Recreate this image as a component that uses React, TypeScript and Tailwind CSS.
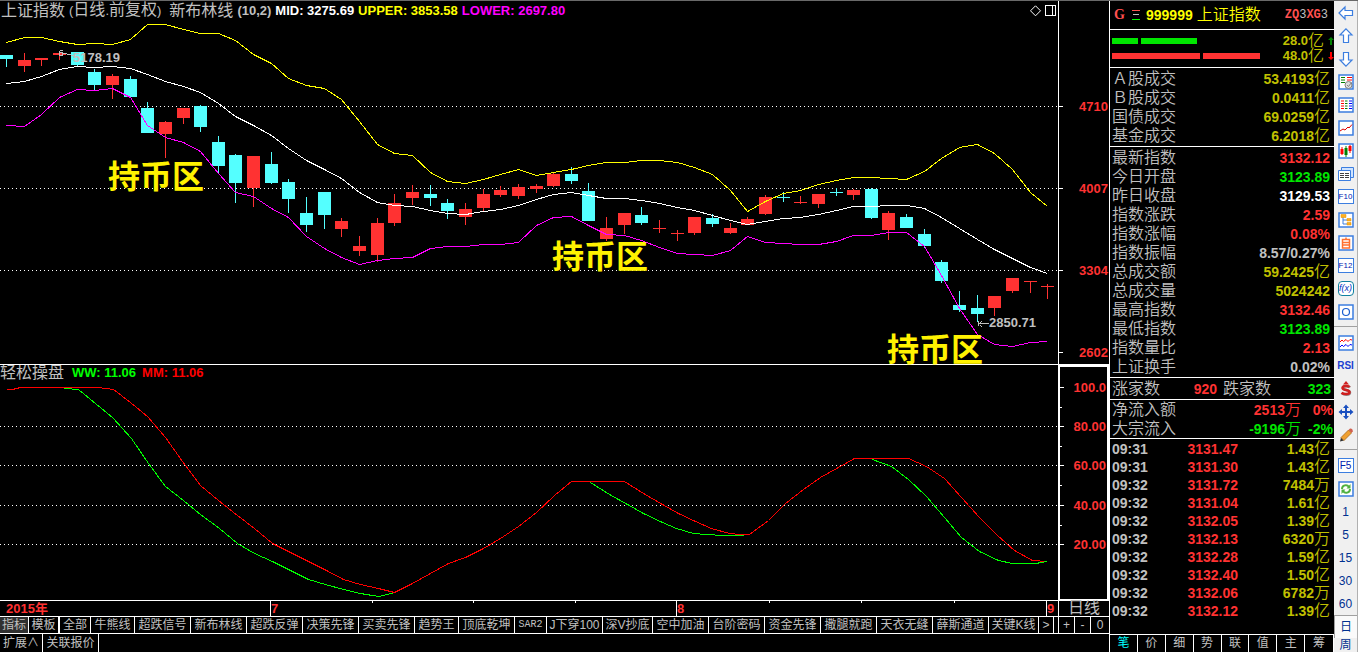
import { clsx } from "clsx";
import { useState } from "react";
import type { ReactNode } from "react";

const RED = "#ff3232";
const CYAN = "#54ffff";

// chart canvas: 60 daily candles over a 1058 unit wide plot
const STEP = 17.65;
const candleX = (i: number) => Math.round(6 + i * STEP);

// [up ? 1 : 0, body top, body bottom, high, low]
const candles: number[][] = [
    [0, 55, 59, 55, 67],
    [1, 60, 66, 53, 72],
    [1, 58, 60, 58, 66],
    [1, 53, 55, 53, 60],
    [0, 52, 65, 52, 66],
    [0, 72, 85, 69, 90],
    [1, 76, 85, 74, 99],
    [0, 79, 97, 76, 97],
    [0, 108, 133, 102, 133],
    [1, 122, 134, 121, 158],
    [1, 108, 118, 108, 124],
    [0, 106, 127, 105, 132],
    [0, 142, 166, 136, 173],
    [0, 155, 183, 154, 203],
    [1, 156, 188, 156, 207],
    [0, 164, 183, 152, 184],
    [0, 182, 199, 179, 213],
    [0, 213, 225, 197, 232],
    [0, 192, 215, 192, 229],
    [1, 221, 229, 218, 237],
    [1, 246, 251, 236, 256],
    [1, 223, 255, 218, 262],
    [1, 203, 223, 194, 226],
    [1, 192, 198, 185, 205],
    [0, 194, 198, 185, 206],
    [0, 203, 211, 199, 219],
    [1, 209, 217, 203, 225],
    [1, 194, 208, 189, 212],
    [1, 190, 195, 186, 197],
    [1, 187, 196, 184, 199],
    [1, 186, 189, 184, 193],
    [1, 174, 186, 172, 187],
    [0, 174, 181, 167, 184],
    [0, 191, 221, 183, 221],
    [1, 228, 239, 217, 241],
    [1, 213, 225, 213, 234],
    [0, 215, 223, 207, 225],
    [1, 228, 229, 220, 233],
    [1, 233, 234, 230, 241],
    [1, 217, 233, 217, 235],
    [0, 218, 224, 214, 227],
    [1, 228, 233, 223, 234],
    [1, 219, 225, 217, 225],
    [1, 197, 214, 195, 215],
    [0, 197, 198, 192, 202],
    [1, 202, 203, 196, 204],
    [1, 194, 204, 194, 208],
    [0, 192, 193, 188, 196],
    [1, 190, 195, 189, 200],
    [0, 189, 218, 188, 219],
    [1, 213, 230, 211, 240],
    [0, 217, 228, 214, 228],
    [0, 234, 246, 229, 248],
    [0, 262, 281, 260, 283],
    [0, 305, 310, 291, 312],
    [0, 308, 314, 295, 322],
    [1, 296, 308, 296, 316],
    [1, 278, 291, 278, 293],
    [1, 281, 282, 281, 293],
    [1, 286, 287, 284, 299],
];

const upper = [
    42, 37, 37, 41, 44, 43, 44, 39, 24, 24, 29, 33, 33, 40, 54, 63, 78, 85, 88,
    99, 121, 144, 153, 155, 172, 181, 183, 179, 174, 169, 175, 172, 169, 165,
    162, 162, 160, 160, 162, 167, 174, 190, 211, 201, 193, 190, 184, 180, 177,
    177, 178, 179, 171, 158, 147, 144, 153, 169, 192, 206,
];
const mid = [
    83, 81, 76, 69, 66, 67, 66, 68, 74, 81, 86, 92, 103, 116, 125, 135, 148,
    160, 169, 178, 192, 202, 205, 206, 210, 213, 214, 211, 209, 205, 199, 194,
    192, 195, 198, 198, 200, 203, 207, 210, 215, 220, 224, 221, 218, 217, 214,
    210, 206, 206, 205, 205, 208, 217, 228, 239, 249, 258, 267, 273,
];
const lower = [
    125, 126, 114, 97, 89, 90, 88, 97, 125, 137, 142, 151, 173, 192, 196, 208,
    217, 236, 248, 257, 264, 260, 258, 257, 248, 246, 246, 244, 244, 242, 225,
    217, 216, 225, 234, 235, 240, 247, 253, 254, 255, 250, 236, 242, 243, 244,
    244, 241, 235, 235, 232, 232, 246, 275, 308, 334, 344, 346, 342, 341,
];

const toPoints = (ys: number[]) =>
    ys.map((y, i) => `${candleX(i) + 0.5},${y + 0.5}`).join(" ");

const wwLine =
    "64,388 78,389 95,403 112,417 131,438 148,463 165,486 183,500 200,514 219,528 237,543 254,553 272,561 290,570 308,579 325,584 343,589 360,593 378,596 395,592";
const wwLine2 =
    "590,482 609,494 627,504 643,513 662,522 676,528 693,533 706,534 723,535 740,535 748,534";
const wwLine3 =
    "872,459 891,466 908,479 926,496 944,517 961,537 979,551 998,560 1012,563 1035,563 1047,561";
const mmLine =
    "6,389 12,389 20,387 98,387 113,389 130,402 147,416 165,437 182,461 200,485 218,500 237,515 254,528 272,543 290,552 308,561 326,570 343,579 360,584 378,588 394,592 412,583 430,573 448,563 465,557 483,548 500,538 518,526 536,512 554,495 571,481 624,481 643,493 662,504 678,513 695,521 711,528 729,533 740,534 749,534 768,520 785,503 803,489 820,477 838,467 854,458 908,458 926,466 944,478 961,497 979,517 997,535 1014,550 1032,560 1047,561";

const priceAxis = [
    { label: "4710", y: 106 },
    { label: "4007", y: 188 },
    { label: "3304", y: 270 },
    { label: "2602", y: 352 },
];
const indicatorAxis = [
    { label: "100.0", y: 387 },
    { label: "80.00", y: 426 },
    { label: "60.00", y: 465 },
    { label: "40.00", y: 505 },
    { label: "20.00", y: 544 },
];

const zones = [
    { x: 108, y: 177 },
    { x: 552, y: 257 },
    { x: 887, y: 350 },
];

const months = [
    { label: "7", x: 270 },
    { label: "8", x: 676 },
    { label: "9", x: 1046 },
];

const tabs = [
    { label: "模板", w: "w-[31px] border-r-2" },
    { label: "全部", w: "w-[31px]" },
    { label: "牛熊线", w: "w-11" },
    { label: "超跌信号", w: "w-14" },
    { label: "新布林线", w: "w-14" },
    { label: "超跌反弹", w: "w-14" },
    { label: "决策先锋", w: "w-14" },
    { label: "买卖先锋", w: "w-14" },
    { label: "趋势王", w: "w-11" },
    { label: "顶底乾坤", w: "w-14" },
    { label: "SAR2", w: "w-8 font-['Liberation_Mono',monospace] text-[10px]" },
    { label: "J下穿100", w: "w-14" },
    { label: "深V抄底", w: "w-[50px]" },
    { label: "空中加油", w: "w-14" },
    { label: "台阶密码", w: "w-14" },
    { label: "资金先锋", w: "w-14" },
    { label: "撒腿就跑", w: "w-14" },
    { label: "天衣无缝", w: "w-14" },
    { label: "薛斯通道", w: "w-14" },
    { label: "关键K线", w: "w-[50px]" },
];

const turnover = [
    ["Ａ股成交", "53.4193"],
    ["Ｂ股成交", "0.0411"],
    ["国债成交", "69.0259"],
    ["基金成交", "6.2018"],
];

const quotes = [
    { label: "最新指数", value: "3132.12", color: "text-[#ff3232]" },
    { label: "今日开盘", value: "3123.89", color: "text-[#00e600]" },
    { label: "昨日收盘", value: "3129.53", color: "text-white" },
    { label: "指数涨跌", value: "2.59", color: "text-[#ff3232]" },
    { label: "指数涨幅", value: "0.08%", color: "text-[#ff3232]" },
    { label: "指数振幅", value: "8.57/0.27%", color: "text-[#c0c0c0]" },
    { label: "总成交额", value: "59.2425", unit: "亿", color: "text-[#c0c000]" },
    { label: "总成交量", value: "5024242", color: "text-[#c0c000]" },
    { label: "最高指数", value: "3132.46", color: "text-[#ff3232]" },
    { label: "最低指数", value: "3123.89", color: "text-[#00e600]" },
    { label: "指数量比", value: "2.13", color: "text-[#ff3232]" },
    { label: "上证换手", value: "0.02%", color: "text-[#c0c0c0]" },
];

const ticks = [
    ["09:31", "3131.47", "1.43", "亿"],
    ["09:31", "3131.30", "1.43", "亿"],
    ["09:32", "3131.72", "7484", "万"],
    ["09:32", "3131.04", "1.61", "亿"],
    ["09:32", "3132.05", "1.39", "亿"],
    ["09:32", "3132.13", "6320", "万"],
    ["09:32", "3132.28", "1.59", "亿"],
    ["09:32", "3132.40", "1.50", "亿"],
    ["09:32", "3132.06", "6782", "万"],
    ["09:32", "3132.12", "1.39", "亿"],
];

const Unit = ({ children }: { children: ReactNode }) => (
    <span className="text-base leading-none font-[350]">{children}</span>
);

const PriceChart = () => (
    <section className="relative min-h-0">
        <svg
            viewBox="0 1 1058 363"
            preserveAspectRatio="none"
            shapeRendering="crispEdges"
            className="block h-full w-full"
            fill="none"
        >
            {[106, 188, 270].map((y) => (
                <line
                    key={y}
                    x1="0"
                    x2="1058"
                    y1={y + 0.5}
                    y2={y + 0.5}
                    stroke="#fff"
                    strokeDasharray="1 3"
                />
            ))}
            {candles.map(([up, top, bottom, high, low], i) => (
                <g key={i} fill={up ? RED : CYAN}>
                    <rect x={candleX(i)} y={high} width="1" height={low - high} />
                    <rect
                        x={candleX(i) - 6}
                        y={top}
                        width="13"
                        height={bottom - top}
                    />
                </g>
            ))}
            <polyline points={toPoints(upper)} stroke="#ffff00" />
            <polyline points={toPoints(mid)} stroke="#fff" />
            <polyline points={toPoints(lower)} stroke="#ff00ff" />
            <path
                d="M63 50.5h-2.500l-1.500 2v3h3.500v-3h-3M63 53.500h4M67 54.500h4M71 55.500h3"
                stroke="#c0c0c0"
            />
            <path
                d="M978 323.500h11M978.500 321v5M980.500 321.500v1M981.500 320.500v1M980.500 324.500v1M981.500 325.500v1"
                stroke="#c0c0c0"
            />
        </svg>

        <div className="absolute inset-x-0 top-0 flex items-center gap-1 px-px text-[13px] leading-[18px] font-bold whitespace-nowrap">
            <h1 className="flex items-center gap-1 font-normal text-[#c0c0c0]">
                <span className="text-base leading-[18px]">上证指数</span>
                <span>
                    (<span className="text-base leading-[18px]">日线</span>.
                    <span className="text-base leading-[18px]">前复权</span>)
                </span>
                <span className="pl-1 text-base leading-[18px]">新布林线</span>
                <span className="font-bold">(10,2)</span>
            </h1>
            <span className="text-white">MID: 3275.69</span>
            <span className="text-[#ffff00]">UPPER: 3853.58</span>
            <span className="text-[#ff00ff]">LOWER: 2697.80</span>
            <svg
                viewBox="0 0 26 12"
                className="mr-px ml-auto h-3 w-[26px]"
                fill="none"
                stroke="#fff"
            >
                <path d="M5.500 .8l5 5-5 5-5-5z" />
                <path
                    d="M15.500 .5h10v10h-10zM22.500 .5v10"
                    shapeRendering="crispEdges"
                />
            </svg>
        </div>

        <Annotation x={73} y={57}>
            5178.19
        </Annotation>
        <Annotation x={989} y={322}>
            2850.71
        </Annotation>
        {zones.map((z) => (
            <span
                key={z.x}
                className="absolute -translate-y-1/2 text-[32px] leading-8 font-bold text-[#fff200]"
                style={{
                    left: `${(z.x / 1058) * 100}%`,
                    top: `${((z.y - 1) / 363) * 100}%`,
                }}
            >
                持币区
            </span>
        ))}
    </section>
);

const Annotation = (props: { x: number; y: number; children: ReactNode }) => (
    <span
        className="absolute -translate-y-1/2 text-[13px] leading-4 font-bold text-[#c0c0c0]"
        style={{
            left: `${(props.x / 1058) * 100}%`,
            top: `${(props.y / 363) * 100}%`,
        }}
    >
        {props.children}
    </span>
);

const IndicatorChart = () => (
    <section className="relative min-h-0 overflow-hidden">
        <svg
            viewBox="0 365 1058 235"
            preserveAspectRatio="none"
            shapeRendering="crispEdges"
            className="block h-full w-full"
            fill="none"
        >
            {[426, 465, 505, 544].map((y) => (
                <line
                    key={y}
                    x1="0"
                    x2="1058"
                    y1={y + 0.5}
                    y2={y + 0.5}
                    stroke="#fff"
                    strokeDasharray="1 3"
                />
            ))}
            <g transform="translate(.5 .5)">
                <polyline points={wwLine} stroke="#00ff00" />
                <polyline points={wwLine2} stroke="#00ff00" />
                <polyline points={mmLine} stroke="#ff0000" />
                <polyline points={wwLine3} stroke="#00ff00" />
            </g>
        </svg>
        <div className="absolute inset-x-0 top-0 flex items-center gap-1.5 text-[13px] leading-4 font-bold whitespace-nowrap">
            <h2 className="w-[66px] text-base leading-4 font-normal text-[#c0c0c0]">
                轻松操盘
            </h2>
            <span className="text-[#00ff00]">WW: 11.06</span>
            <span className="text-[#ff0000]">MM: 11.06</span>
        </div>
    </section>
);

const AxisScale = (props: {
    items: { label: string; y: number }[];
    start: number;
    height: number;
    minor?: number[];
}) => {
    const { items, start, height, minor } = props;
    const top = (y: number) => `${((y - start) / height) * 100}%`;

    return (
        <>
            {items.map((item) => (
                <div
                    key={item.label}
                    className="absolute inset-x-0 flex h-px items-center justify-between pr-px"
                    style={{ top: top(item.y) }}
                >
                    <span className="h-px w-1 bg-white" />
                    <span className="text-[13px] leading-4 font-bold text-[#ff3232]">
                        {item.label}
                    </span>
                </div>
            ))}
            {minor?.map((y) => (
                <span
                    key={y}
                    className="absolute left-0 h-px w-0.5 bg-white"
                    style={{ top: top(y) }}
                />
            ))}
        </>
    );
};

const TimeAxis = () => (
    <div className="flex h-[17px] border-y border-white">
        <div className="relative min-w-0 flex-1 text-[13px] leading-4 font-bold text-[#ff3232]">
            <span className="pl-1.5">2015年</span>
            {months.map((m) => (
                <span
                    key={m.label}
                    className="absolute top-0 h-full border-l border-white"
                    style={{ left: `${(m.x / 1058) * 100}%` }}
                >
                    {m.label}
                </span>
            ))}
            {[372, 473, 575, 769, 861, 954].map((x) => (
                <span
                    key={x}
                    className="absolute top-0 h-0.5 w-px bg-white"
                    style={{ left: `${(x / 1058) * 100}%` }}
                />
            ))}
        </div>
        <div className="w-[51px] border-l border-white text-center text-base leading-[14px] text-[#c0c0c0]">
            日线
        </div>
    </div>
);

const tabClass =
    "flex-none overflow-hidden border-r border-white text-center whitespace-nowrap";

const BottomTabs = () => {
    const [active, setActive] = useState("指标");

    return (
        <>
            <nav className="flex h-[17px] border-b border-white text-xs leading-4 text-[#c0c0c0]">
                <div className="flex min-w-0 flex-1 overflow-hidden">
                    {[{ label: "指标", w: "w-[29px]" }, ...tabs].map((tab) => (
                        <button
                            key={tab.label}
                            onClick={() => setActive(tab.label)}
                            className={clsx(
                                tabClass,
                                tab.w,
                                active === tab.label && "bg-[#303030]"
                            )}
                        >
                            {tab.label}
                        </button>
                    ))}
                    <button className="w-[15px] border-r border-white text-center">
                        &gt;
                    </button>
                </div>
                <button className="w-[17px] border-x border-white">+</button>
                <button className="w-4 border-r border-white">-</button>
                <button className="w-[18px]">0</button>
            </nav>
            <div className="flex h-[18px] text-xs leading-[18px] text-[#c0c0c0]">
                <button className="w-[43px] border-r border-white">扩展∧</button>
                <button className="w-14 border-r border-white">关联报价</button>
            </div>
        </>
    );
};

const SideHeader = () => (
    <header className="flex h-7 items-center pr-1.5 pl-1 whitespace-nowrap">
        <span className="w-[18px] font-['Liberation_Serif',serif] text-sm font-bold text-[#ff5050]">
            G
        </span>
        <svg
            viewBox="0 0 8 10"
            shapeRendering="crispEdges"
            className="mr-1.5 h-2.5 w-2"
        >
            <path d="M0 0h8v1H0z" fill="#ff5050" />
            <path d="M1 4h6v1H1z" fill="#c0c0c0" />
            <path d="M0 9h8v1H0z" fill="#00ff00" />
        </svg>
        <span className="text-sm font-bold text-[#ffff00]">999999</span>
        <span className="pl-1 text-base font-[350] text-[#ffff00]">
            上证指数
        </span>
        <span className="ml-auto font-['Liberation_Mono',monospace] text-xs font-bold text-[#ff5050]">
            ZQ<span className="font-normal text-[#c0c0c0]">3</span>XG
            <span className="font-normal text-[#c0c0c0]">3</span>
        </span>
    </header>
);

const VolumeBar = (props: {
    color: string;
    parts: [string, string];
    value: string;
    arrow: ReactNode;
}) => (
    <div className="flex h-[15px] items-center text-[13px] leading-[15px] font-bold text-[#c0c000]">
        <span className={clsx("mr-[3px] h-1.5", props.color, props.parts[0])} />
        <span className={clsx("h-1.5", props.color, props.parts[1])} />
        <span className="ml-auto flex items-center">
            {props.value}
            <Unit>亿</Unit>
        </span>
        {props.arrow}
    </div>
);

const SidePanel = () => {
    const [view, setView] = useState("笔");

    return (
        <aside className="flex w-[225px] flex-none flex-col border-l border-white text-sm font-bold">
            <SideHeader />
            <div className="border-t border-white pt-[3px] pb-1 pl-0.5">
                <VolumeBar
                    color="bg-[#00e600]"
                    parts={["w-[26px]", "w-14"]}
                    value="28.0"
                    arrow={
                        <svg viewBox="0 0 6 8" className="ml-1 h-2 w-1.5" fill="#008000">
                            <path d="M3 0l3 3H4v5H2V3H0z" />
                        </svg>
                    }
                />
                <VolumeBar
                    color="bg-[#ff3232]"
                    parts={["w-[88px]", "w-[57px]"]}
                    value="48.0"
                    arrow={
                        <svg viewBox="0 0 6 8" className="ml-1 h-2 w-1.5" fill="#ff0000">
                            <path d="M3 8L0 5h2V0h2v5h2z" />
                        </svg>
                    }
                />
            </div>

            <dl className="border-t border-white py-px pr-1 pl-0.5">
                {turnover.map(([label, value]) => (
                    <div key={label} className="flex h-[19px] items-center justify-between">
                        <dt className="text-base font-[350] text-[#c0c0c0]">
                            {label}
                        </dt>
                        <dd className="flex items-center text-[#c0c000]">
                            {value}
                            <Unit>亿</Unit>
                        </dd>
                    </div>
                ))}
            </dl>

            <dl className="border-t border-white py-px pr-1 pl-0.5">
                {quotes.map((q) => (
                    <div key={q.label} className="flex h-[19px] items-center justify-between">
                        <dt className="text-base font-[350] text-[#c0c0c0]">
                            {q.label}
                        </dt>
                        <dd className={clsx("flex items-center", q.color)}>
                            {q.value}
                            {q.unit && <Unit>{q.unit}</Unit>}
                        </dd>
                    </div>
                ))}
            </dl>

            <div className="flex h-[22px] items-center border-t border-white pr-[3px] pl-0.5">
                <Unit>
                    <span className="text-[#c0c0c0]">涨家数</span>
                </Unit>
                <span className="flex-1 text-right text-[#ff3232]">920</span>
                <span className="pl-1.5">
                    <Unit>
                        <span className="text-[#c0c0c0]">跌家数</span>
                    </Unit>
                </span>
                <span className="w-[60px] text-right text-[#00e600]">323</span>
            </div>

            <div className="border-t border-white pr-px pl-0.5">
                {[
                    ["净流入额", "2513", "0%", "text-[#ff3232]"],
                    ["大宗流入", "-9196", "-2%", "text-[#00e600]"],
                ].map(([label, value, percent, color]) => (
                    <div key={label} className={clsx("flex h-[19px] items-center", color)}>
                        <span className="text-base font-[350] text-[#c0c0c0]">
                            {label}
                        </span>
                        <span className="ml-auto flex items-center">
                            {value}
                            <Unit>万</Unit>
                        </span>
                        <span className="w-8 text-right">{percent}</span>
                    </div>
                ))}
            </div>

            <div className="min-h-0 flex-1 overflow-hidden border-t border-white pt-px">
                <table className="w-full leading-[18px]">
                    <tbody>
                        {ticks.map(([time, price, amount, unit], i) => (
                            <tr key={i} className="h-[18px]">
                                <td className="p-0 pl-0.5 text-[#c0c0c0]">{time}</td>
                                <td className="p-0 text-right text-[#ff3232]">
                                    {price}
                                </td>
                                <td className="w-24 p-0 pr-1 text-[#c0c000]">
                                    <span className="flex h-[18px] items-center justify-end">
                                        {amount}
                                        <Unit>{unit}</Unit>
                                    </span>
                                </td>
                            </tr>
                        ))}
                    </tbody>
                </table>
            </div>

            <nav className="grid h-[18px] grid-cols-8 border-t border-r border-white text-xs leading-[17px] font-normal">
                {["笔", "价", "细", "势", "联", "值", "主", "筹"].map((name) => (
                    <button
                        key={name}
                        onClick={() => setView(name)}
                        className={clsx(
                            "border-r border-white last:border-r-0",
                            view === name ? "text-[#00ffff]" : "text-[#c0c0c0]"
                        )}
                    >
                        {name}
                    </button>
                ))}
            </nav>
        </aside>
    );
};

const Framed = ({ children }: { children?: ReactNode }) => (
    <svg viewBox="0 0 16 16" className="size-4" fill="none">
        <path d="M1 1h14v14H1z" fill="#fff" stroke="#3c7ee0" strokeWidth="1.500" />
        {children}
    </svg>
);

const TextIcon = ({ children }: { children: ReactNode }) => (
    <span className="block h-[15px] w-4 border border-[#3c7ee0] bg-white text-center text-[8px] leading-[13px] text-[#0020b0]">
        {children}
    </span>
);

const ArrowIcon = ({ d }: { d: string }) => (
    <svg viewBox="0 0 16 16" className="size-4" fill="#fff" stroke="#3c7ee0">
        <path d={d} strokeWidth="1.200" />
    </svg>
);

const tools: { name: string; icon: ReactNode }[] = [
    { name: "返回", icon: <ArrowIcon d="M1 8l6-6v3.500h7.500v5H7v3.500z" /> },
    { name: "上移", icon: <ArrowIcon d="M8 .8l6 6.200h-3.500v7.500h-5v-7.500h-3.500z" /> },
    { name: "下移", icon: <ArrowIcon d="M8 15.200l6-6.200h-3.500v-7.500h-5v7.500h-3.500z" /> },
    {
        name: "报价",
        icon: (
            <Framed>
                <path d="M3 3.500h4M3 6h4M3 8.500h4" stroke="#008000" />
                <path d="M9 3.500h5M9 6h5" stroke="#ff0000" />
                <circle cx="10.500" cy="11" r="3.500" fill="#ddd" stroke="#808080" />
                <path d="M9 11l1.500 1.500 3-4" stroke="#808080" />
            </Framed>
        ),
    },
    {
        name: "列表",
        icon: (
            <Framed>
                <path d="M3 4h3M3 6.500h3M3 9h3M3 11.500h3" stroke="#ff0000" />
                <path d="M7 4h2.500M7 6.500h2.500M7 9h2.500M7 11.500h2.500" stroke="#008000" />
                <path d="M11 4h3M11 6.500h3M11 9h3M11 11.500h3" stroke="#0000ff" />
            </Framed>
        ),
    },
    {
        name: "分时",
        icon: (
            <Framed>
                <path d="M2 11l3-2 2 1 3-3 1 1 3-3.500" stroke="#e00000" />
            </Framed>
        ),
    },
    {
        name: "K线",
        icon: (
            <Framed>
                <path d="M4 4v8M12 2v8" stroke="#ff0000" />
                <path d="M8 3v11" stroke="#008000" />
                <path d="M2.500 6h3v5h-3zM10.500 3h3v5h-3z" fill="#ff0000" />
                <path d="M6.500 5h3v7h-3z" fill="#008000" />
            </Framed>
        ),
    },
    {
        name: "资讯",
        icon: (
            <svg viewBox="0 0 16 16" className="size-4" fill="#fff" stroke="#3c7ee0">
                <path d="M3.500 1.500h12v10h-12z" fill="#cfe4ff" />
                <path d="M.5 4.500h12v10H.5z" />
                <path d="M2 7.500h4M7 7.500h4M2 9.500h4M7 9.500h4M2 11.500h4M7 11.500h4" stroke="#404040" />
            </svg>
        ),
    },
    { name: "基本资料", icon: <TextIcon>F10</TextIcon> },
    {
        name: "板块",
        icon: (
            <Framed>
                <path d="M5 5v7h4M5 8h4" stroke="#3c7ee0" />
                <path d="M3 2.500h5v3H3zM9 6.500h4v2.500H9zM9 10.500h4v2.500H9z" fill="#ffb020" stroke="#e09000" strokeWidth=".5" />
            </Framed>
        ),
    },
    {
        name: "自选",
        icon: (
            <Framed>
                <path d="M4.500 4.500h7v8.500h-7zM4.500 7.500h7M4.500 10h7M8 2.500v2" stroke="#ff7030" strokeWidth="1.500" />
            </Framed>
        ),
    },
    { name: "分类", icon: <TextIcon>F12</TextIcon> },
    {
        name: "公式",
        icon: (
            <span className="block h-[15px] w-4 rounded-sm border border-[#1080a0] bg-white text-center text-[9px] leading-[12px] text-[#0030c0] italic">
                f(x)
            </span>
        ),
    },
    {
        name: "周期",
        icon: (
            <Framed>
                <circle cx="8" cy="8" r="3.500" stroke="#1a5fd0" strokeWidth="1.200" />
            </Framed>
        ),
    },
];

const drawTools: { name: string; icon: ReactNode }[] = [
    {
        name: "叠加",
        icon: (
            <Framed>
                <path d="M2 7l2-2 1.500 1.500L8 4.500l2 2 2-2 2 .5" stroke="#ff0000" />
                <path d="M2 12l2-2 1.500 1.500L8 9.500l2 2 2-2 2 .5" stroke="#0000ff" />
            </Framed>
        ),
    },
    {
        name: "RSI",
        icon: <span className="text-[10px] font-bold text-[#2040d0]">RSI</span>,
    },
    {
        name: "交易",
        icon: (
            <svg viewBox="0 0 16 16" className="size-4" fill="none">
                <path d="M12 6.500C11 5 5 4.500 5 7c0 2.500 7 1.500 7 4.500 0 3-6 2.500-8 .8" stroke="#909090" strokeWidth="2.500" />
                <path d="M11.500 6C10.500 4.500 4.500 4.500 4.500 7c0 2.500 7 1.500 7 4 0 2.800-6 2.500-8 .8" stroke="#d02020" strokeWidth="2.500" />
                <path d="M8 0l3 3.500H5z" fill="#d02020" />
            </svg>
        ),
    },
    {
        name: "移动",
        icon: (
            <svg viewBox="0 0 16 16" className="size-4" fill="#1a50c0">
                <path d="M8 .5l3 3.500H5zM8 15.500l3-3.500H5zM.5 8L4 5v6zM15.500 8L12 5v6z" />
                <path d="M7 4h2v3h3v2H9v3H7V9H4V7h3z" />
            </svg>
        ),
    },
    {
        name: "画线",
        icon: (
            <svg viewBox="0 0 16 16" className="size-4">
                <path d="M2 14.500l1-4 3 3z" fill="#303030" />
                <path d="M3 10.500l7.500-7.500 3 3L6 13.500z" fill="#f0a030" stroke="#a06010" strokeWidth=".7" />
                <path d="M10.500 3L12 1.500c1.500-.5 3 1 2.800 2.800L13.500 6z" fill="#d06050" />
            </svg>
        ),
    },
];

const periodTools: { name: string; icon: ReactNode }[] = [
    { name: "F5", icon: <TextIcon><span className="text-[10px]">F5</span></TextIcon> },
    {
        name: "刷新",
        icon: (
            <Framed>
                <path d="M4 8c0-4 5-5 7-2M12 8c0 4-5 5-7 2" stroke="#50b040" strokeWidth="2" />
                <path d="M12.500 3v4.500H8.500zM3.500 13V8.500h4z" fill="#50b040" />
            </Framed>
        ),
    },
    ...["1", "5", "15", "30", "60"].map((n) => ({ name: `${n}分钟`, icon: n })),
];

const ToolGroup = ({ items }: { items: { name: string; icon: ReactNode }[] }) => (
    <>
        {items.map((tool) => (
            <button
                key={tool.name}
                aria-label={tool.name}
                className="flex h-[23px] w-full flex-none items-center justify-center"
            >
                {tool.icon}
            </button>
        ))}
    </>
);

const Toolbar = () => (
    <div className="flex w-6 flex-none flex-col overflow-hidden border-r border-[#b0b0b0] bg-[#f0f0f0] text-xs text-[#003090]">
        <ToolGroup items={tools} />
        <hr className="my-[3px] h-0.5 flex-none border-t border-[#a0a0a0]" />
        <ToolGroup items={drawTools} />
        <hr className="my-[3px] h-0.5 flex-none border-t border-[#a0a0a0]" />
        <ToolGroup items={periodTools} />
        <button className="h-[23px] flex-none border-t border-l border-[#a0a0a0] bg-[#fafafa]">
            日
        </button>
        <button className="h-3.5 flex-none leading-[14px]">周</button>
    </div>
);

export default function App() {
    return (
        <div className="flex h-screen w-full overflow-hidden border-t border-[#696969] bg-black font-['Liberation_Sans','Noto_Sans_CJK_SC',sans-serif] text-white">
            <main className="flex min-w-0 flex-1 flex-col">
                <div className="grid min-h-0 flex-1 grid-rows-[364fr_235fr]">
                    <div className="grid min-h-0 grid-cols-[minmax(0,1fr)_51px] border-b border-white">
                        <PriceChart />
                        <div className="relative border-l border-white">
                            <AxisScale items={priceAxis} start={1} height={363} />
                        </div>
                    </div>
                    <div className="grid min-h-0 grid-cols-[minmax(0,1fr)_51px]">
                        <IndicatorChart />
                        <div className="relative border-2 border-b border-white">
                            <AxisScale
                                items={indicatorAxis}
                                start={367}
                                height={232}
                                minor={[407, 446, 485, 525]}
                            />
                        </div>
                    </div>
                </div>
                <TimeAxis />
                <BottomTabs />
            </main>
            <SidePanel />
            <Toolbar />
        </div>
    );
}
